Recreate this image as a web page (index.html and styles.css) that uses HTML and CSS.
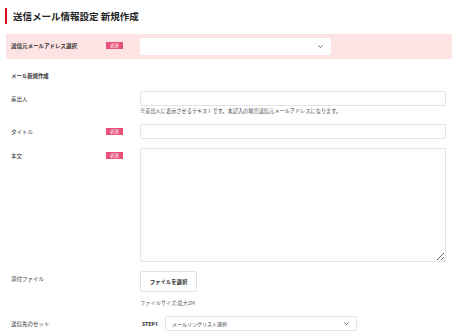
FILE: index.html
```html
<!DOCTYPE html>
<html lang="ja">
<head>
    <meta charset="UTF-8">
    <meta name="viewport" content="width=device-width, initial-scale=1.0">
    <title>送信メール情報設定 新規作成</title>
    <link rel="stylesheet" href="styles.css">
</head>
<body>
    <h1 class="page-title">送信メール情報設定 新規作成</h1>

    <form id="form-mail">
        <div class="row row-from">
            <label class="row-label">送信元メールアドレス選択</label>
            <div class="row-badge"><span class="badge">必須</span></div>
            <div class="row-field">
                <div class="select-wrap select-from">
                    <select class="select"></select>
                    <svg class="chevron" width="5" height="3" viewBox="0 0 5 3"><path d="M0.5 0.5 L2.5 2.5 L4.5 0.5" fill="none" stroke="#555" stroke-width="0.9"/></svg>
                </div>
            </div>
        </div>

        <h2 class="section-title">メール新規作成</h2>

        <div class="row row-sender">
            <label class="row-label" for="sender">差出人</label>
            <div class="row-badge"></div>
            <div class="row-field">
                <input type="text" id="sender" class="input">
                <p class="note note-sender">※差出人に表示させるテキストです。未記入の場合送信元メールアドレスになります。</p>
            </div>
        </div>

        <div class="row">
            <label class="row-label" for="subject">タイトル</label>
            <div class="row-badge"><span class="badge">必須</span></div>
            <div class="row-field">
                <input type="text" id="subject" class="input">
            </div>
        </div>

        <div class="row">
            <label class="row-label" for="body">本文</label>
            <div class="row-badge"><span class="badge">必須</span></div>
            <div class="row-field">
                <textarea id="body" class="textarea"></textarea>
            </div>
        </div>

        <div class="row">
            <label class="row-label">添付ファイル</label>
            <div class="row-badge"></div>
            <div class="row-field">
                <button type="button" class="file-button">ファイルを選択</button>
                <p class="note note-file">ファイルサイズ:最大2M</p>
            </div>
        </div>

        <div class="row">
            <label class="row-label">送信先のセット</label>
            <div class="row-badge"></div>
            <div class="row-field step">
                <span class="step-label">STEP1</span>
                <div class="select-wrap select-list">
                    <select class="select"><option>メールリングリスト選択</option></select>
                    <svg class="chevron" width="5" height="3" viewBox="0 0 5 3"><path d="M0.5 0.5 L2.5 2.5 L4.5 0.5" fill="none" stroke="#555" stroke-width="0.9"/></svg>
                </div>
            </div>
        </div>
    </form>
</body>
</html>
```

FILE: styles.css
```css
body {
    margin: 0;
    padding: 8px 0 0 6px;
    font-family: "Noto Sans CJK JP", "Noto Sans", sans-serif;
    color: #333;
    background: #fff;
}
.page-title {
    margin: 0 0 0 -1px;
    padding-left: 6px;
    border-left: 2px solid #d3101c;
    height: 16px;
    line-height: 16px;
    font-size: 9.5px;
    font-weight: bold;
    color: #222;
}
.row {
    display: grid;
    grid-template-columns: 95px 34px 1fr;
    align-items: start;
    padding: 0 6px 0 5px;
    margin-top: 9px;
    line-height: 8px;
}
.row-from {
    margin-top: 10px;
    padding-top: 4px;
    padding-bottom: 4px;
    background: #fde3e3;
}
.row-sender {
    margin-top: 11px;
}
.row-label {
    display: block;
    padding-top: 4px;
    line-height: 8px;
    font-size: 5.5px;
    color: #333;
}
.row-from .row-label {
    font-weight: bold;
    color: #333;
}
.row-badge {
    display: flex;
    align-items: flex-start;
    padding-top: 4px;
}
.badge {
    display: block;
    width: 17px;
    height: 7px;
    line-height: 7px;
    text-align: center;
    font-size: 4.2px;
    color: #fff;
    background: #e8507c;
}
.row-field {
    font-size: 0;
}
.section-title {
    margin: 13px 0 0 5px;
    line-height: 8px;
    font-size: 5.4px;
    font-weight: bold;
    color: #333;
}
.input,
.textarea,
.select {
    display: block;
    box-sizing: border-box;
    width: 100%;
    margin: 0;
    border: 1px solid #e4e4e4;
    border-radius: 2px;
    background: #fff;
    font-family: inherit;
}
.input {
    height: 15px;
}
.textarea {
    height: 114px;
}
.select-wrap {
    position: relative;
}
.select {
    height: 17px;
    padding: 0 0 0 6px;
    appearance: none;
    font-size: 5px;
    color: #444;
}
.select-from {
    width: 191px;
}
.select-from .select {
    border-color: #fff;
}
.select-list {
    width: 192px;
}
.select-list .select {
    height: 15px;
}
.chevron {
    position: absolute;
    right: 8px;
    top: 7px;
}
.select-list .chevron {
    top: 6px;
}
.note {
    margin: 1px 0 0;
    line-height: 8px;
    font-size: 5.2px;
    color: #444;
}
.note-file {
    margin-top: 7px;
    color: #666;
}
.file-button {
    display: block;
    width: 57px;
    height: 21px;
    margin: 0;
    padding: 0;
    border: 1px solid #e2e2e2;
    border-radius: 2px;
    background: #fff;
    font-family: inherit;
    font-size: 5.4px;
    font-weight: bold;
    color: #333;
}
.step {
    display: flex;
    align-items: center;
    gap: 7px;
}
.step-label {
    padding-left: 2px;
    font-family: "Open Sans", "Noto Sans", sans-serif;
    font-size: 5.5px;
    font-weight: bold;
    color: #333;
}
```
